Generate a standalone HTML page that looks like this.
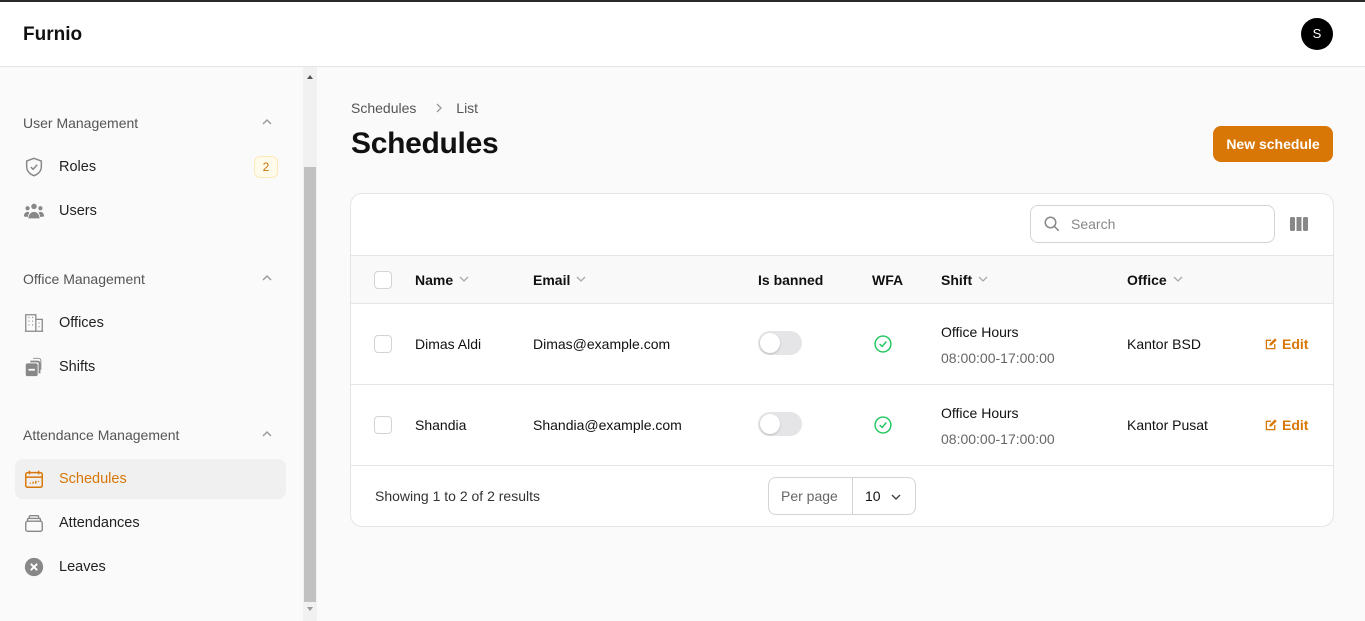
<!DOCTYPE html>
<html><head><style>
*{box-sizing:border-box;margin:0;padding:0}
body{width:1365px;height:621px;overflow:hidden;background:#fafafa;font-family:"Liberation Sans",sans-serif;color:#111;position:relative}
.top{position:absolute;left:0;top:0;width:1365px;height:67px;background:#fff;border-bottom:1px solid #e5e5e5;border-top:2px solid #2a2a2a}
.logo{position:absolute;left:23px;top:22px;font-size:19px;font-weight:bold;color:#111}
.av{position:absolute;left:1301px;top:16px;width:32px;height:32px;border-radius:50%;background:#000;color:#fff;font-size:13px;text-align:center;line-height:32px}
.side{position:absolute;left:0;top:67px;width:303px;height:554px;background:#fafafa}
.sb{position:absolute;left:303px;top:67px;width:14px;height:554px;background:#f1f1f1}
.sb .th{position:absolute;left:1px;top:100px;width:12px;height:435px;background:#c1c1c1}
.grp{position:absolute;left:23px;font-size:14px;color:#555}
.chev{position:absolute;left:262px;width:10px;height:10px}
.it{position:absolute;left:23px;font-size:14.5px;color:#222;display:flex;align-items:center}
.it svg{width:22px;height:22px;margin-right:14px}
.act{position:absolute;left:15px;top:459px;width:271px;height:40px;background:#f0f0f1;border-radius:8px}
.badge{position:absolute;left:254px;top:156px;width:24px;height:22px;border:1px solid #fde9b8;background:#fffbeb;color:#c2750c;border-radius:6px;font-size:12px;text-align:center;line-height:20px}
.bc{position:absolute;left:351px;top:100px;font-size:14px;color:#555}
h1{position:absolute;left:351px;top:127px;font-size:30px;font-weight:bold;color:#111;letter-spacing:-0.3px}
.btn{position:absolute;left:1213px;top:126px;width:120px;height:36px;background:#d97706;color:#fff;border-radius:8px;font-size:14px;font-weight:bold;text-align:center;line-height:36px}
.card{position:absolute;left:350px;top:193px;width:984px;height:334px;background:#fff;border:1px solid #e5e5e5;border-radius:12px;overflow:hidden}
.search{position:absolute;left:679px;top:11px;width:245px;height:38px;border:1px solid #d4d4d4;border-radius:8px;font-size:14px;color:#888;padding-left:40px;line-height:36px}
.thead{position:absolute;left:0;top:61px;width:984px;height:49px;background:#f9f9f9;border-top:1px solid #e5e5e5;border-bottom:1px solid #e5e5e5}
.t{position:absolute;font-size:14px}
.h{font-weight:bold;color:#111}
.h svg{margin-left:6px;vertical-align:1px}
.cb{position:absolute;left:23px;width:18px;height:18px;border:1px solid #d4d4d4;border-radius:4px;background:#fff}
.row{position:absolute;left:0;width:984px;height:81px;border-bottom:1px solid #e5e5e5}
.tog{position:absolute;left:407px;width:44px;height:24px;background:#e5e5e7;border-radius:12px}
.tog:after{content:"";position:absolute;left:2px;top:2px;width:20px;height:20px;border-radius:50%;background:#fff;box-shadow:0 1px 2px rgba(0,0,0,.2)}
.gray{color:#666}
.edit{color:#d97706;font-weight:bold}
.edit svg{vertical-align:-2px;margin-right:4px}
.pp{position:absolute;left:417px;top:283px;width:148px;height:38px;border:1px solid #d4d4d4;border-radius:8px;font-size:14px}
</style></head><body>
<div class="top"><div class="logo">Furnio</div><div class="av">S</div></div>
<div class="side"></div>
<div class="grp" style="top:115px">User Management</div>
<svg class="chev" style="top:117px" viewBox="0 0 10 10"><path d="M1 7l4-4 4 4" fill="none" stroke="#999" stroke-width="1.4"/></svg>
<div class="it" style="top:156px"><svg viewBox="0 0 24 24" fill="none" stroke="#888" stroke-width="1.6"><path d="M12 2.5l8 3v6c0 5-3.5 8.5-8 10-4.5-1.5-8-5-8-10v-6z"/><path d="M8.5 12l2.5 2.5 4.5-5"/></svg>Roles</div>
<div class="badge">2</div>
<div class="it" style="top:200px"><svg viewBox="0 0 24 24" fill="#888"><circle cx="12" cy="7" r="3"/><circle cx="5" cy="9" r="2.3"/><circle cx="19" cy="9" r="2.3"/><path d="M6 20c0-4 2.5-7 6-7s6 3 6 7z"/><path d="M1 18c0-3 1.5-5 4-5 1 0 1.5.3 2 .6-1 1.3-1.5 3-1.7 5z"/><path d="M23 18c0-3-1.5-5-4-5-1 0-1.5.3-2 .6 1 1.3 1.5 3 1.7 5z"/></svg>Users</div>
<div class="grp" style="top:271px">Office Management</div>
<svg class="chev" style="top:273px" viewBox="0 0 10 10"><path d="M1 7l4-4 4 4" fill="none" stroke="#999" stroke-width="1.4"/></svg>
<div class="it" style="top:312px"><svg viewBox="0 0 24 24" fill="none" stroke="#888" stroke-width="1.4"><path d="M3 21V3h11v18M14 8h7v13M2 21h20M6 6h1M10 6h1M6 10h1M10 10h1M6 14h1M10 14h1M17 12h1M17 16h1"/></svg>Offices</div>
<div class="it" style="top:356px"><svg viewBox="0 0 24 24" fill="#888"><rect x="3" y="8" width="13" height="14" rx="2"/><path d="M8 5h8a3 3 0 013 3v11h-2V8a1 1 0 00-1-1H8z"/><path d="M11 2h6a3 3 0 013 3v10h-1V5a2 2 0 00-2-2h-6z"/><rect x="6" y="14" width="7" height="2" fill="#fafafa"/></svg>Shifts</div>
<div class="grp" style="top:427px">Attendance Management</div>
<svg class="chev" style="top:429px" viewBox="0 0 10 10"><path d="M1 7l4-4 4 4" fill="none" stroke="#999" stroke-width="1.4"/></svg>
<div class="act"></div>
<div class="it" style="top:468px;color:#d97706"><svg viewBox="0 0 24 24" fill="none" stroke="#d97706" stroke-width="1.6"><rect x="3" y="5" width="18" height="16" rx="2"/><path d="M3 10h18M7 3v4M17 3v4M8 16v1M11 15v2M14 14v3M17 14v1"/></svg>Schedules</div>
<div class="it" style="top:512px"><svg viewBox="0 0 24 24" fill="none" stroke="#888" stroke-width="1.5"><rect x="3" y="10" width="18" height="11" rx="2"/><path d="M5 10V8a1 1 0 011-1h12a1 1 0 011 1v2M7 7V5a1 1 0 011-1h8a1 1 0 011 1v2"/></svg>Attendances</div>
<div class="it" style="top:556px"><svg viewBox="0 0 24 24"><circle cx="12" cy="12" r="10" fill="#888"/><path d="M8.5 8.5l7 7M15.5 8.5l-7 7" stroke="#fff" stroke-width="2"/></svg>Leaves</div>
<div class="sb"><div class="th"></div><div style="position:absolute;left:4px;top:5px;border:3px solid transparent;border-bottom:4px solid #555"></div><div style="position:absolute;left:4px;top:540px;border:3px solid transparent;border-top:4px solid #999"></div></div>

<div class="bc">Schedules <svg width="10" height="10" viewBox="0 0 10 10" style="margin:0 12px 0 14px"><path d="M3 1l4 4-4 4" fill="none" stroke="#999" stroke-width="1.3"/></svg>List</div>
<h1>Schedules</h1>
<div class="btn">New schedule</div>
<div class="card">
<div class="search">Search</div>
<svg style="position:absolute;left:692px;top:21px" width="18" height="18" viewBox="0 0 24 24" fill="none" stroke="#888" stroke-width="2"><circle cx="10" cy="10" r="7"/><path d="M15 15l6 6"/></svg>
<svg style="position:absolute;left:939px;top:22px" width="18" height="16" viewBox="0 0 18 16" fill="#888"><rect x="0" y="1" width="5" height="14" rx="1.5"/><rect x="6.5" y="1" width="5" height="14"/><rect x="13" y="1" width="5" height="14" rx="1.5"/></svg>
<div class="thead">
<div class="cb" style="top:15px"></div>
<div class="t h" style="left:64px;top:16px">Name<svg width="10" height="10" viewBox="0 0 10 10"><path d="M1 3l4 4 4-4" fill="none" stroke="#aaa" stroke-width="1.3"/></svg></div>
<div class="t h" style="left:182px;top:16px">Email<svg width="10" height="10" viewBox="0 0 10 10"><path d="M1 3l4 4 4-4" fill="none" stroke="#aaa" stroke-width="1.3"/></svg></div>
<div class="t h" style="left:407px;top:16px">Is banned</div>
<div class="t h" style="left:521px;top:16px">WFA</div>
<div class="t h" style="left:590px;top:16px">Shift<svg width="10" height="10" viewBox="0 0 10 10"><path d="M1 3l4 4 4-4" fill="none" stroke="#aaa" stroke-width="1.3"/></svg></div>
<div class="t h" style="left:776px;top:16px">Office<svg width="10" height="10" viewBox="0 0 10 10"><path d="M1 3l4 4 4-4" fill="none" stroke="#aaa" stroke-width="1.3"/></svg></div>
</div>
<div class="row" style="top:110px">
<div class="cb" style="top:31px"></div>
<div class="t" style="left:64px;top:32px">Dimas Aldi</div>
<div class="t" style="left:182px;top:32px">Dimas@example.com</div>
<div class="tog" style="top:27px"></div>
<svg style="position:absolute;left:522px;top:30px" width="20" height="20" viewBox="0 0 24 24" fill="none" stroke="#22c55e" stroke-width="1.7"><circle cx="12" cy="12" r="9.5"/><path d="M8 12l3 3 5-6"/></svg>
<div class="t" style="left:590px;top:20px">Office Hours</div>
<div class="t gray" style="left:590px;top:46px">08:00:00-17:00:00</div>
<div class="t" style="left:776px;top:32px">Kantor BSD</div>
<div class="t edit" style="left:913px;top:32px"><svg width="14" height="14" viewBox="0 0 16 16"><path d="M2 3h6v1.5H3.5v8h8V8H13v6H2z" fill="#d97706"/><path d="M6 10l.5-2.5L12.5 1.5l2 2L8.5 9.5z" fill="#d97706"/></svg>Edit</div>
</div>
<div class="row" style="top:191px">
<div class="cb" style="top:31px"></div>
<div class="t" style="left:64px;top:32px">Shandia</div>
<div class="t" style="left:182px;top:32px">Shandia@example.com</div>
<div class="tog" style="top:27px"></div>
<svg style="position:absolute;left:522px;top:30px" width="20" height="20" viewBox="0 0 24 24" fill="none" stroke="#22c55e" stroke-width="1.7"><circle cx="12" cy="12" r="9.5"/><path d="M8 12l3 3 5-6"/></svg>
<div class="t" style="left:590px;top:20px">Office Hours</div>
<div class="t gray" style="left:590px;top:46px">08:00:00-17:00:00</div>
<div class="t" style="left:776px;top:32px">Kantor Pusat</div>
<div class="t edit" style="left:913px;top:32px"><svg width="14" height="14" viewBox="0 0 16 16"><path d="M2 3h6v1.5H3.5v8h8V8H13v6H2z" fill="#d97706"/><path d="M6 10l.5-2.5L12.5 1.5l2 2L8.5 9.5z" fill="#d97706"/></svg>Edit</div>
</div>
<div class="t" style="left:24px;top:294px;color:#333">Showing 1 to 2 of 2 results</div>
<div class="pp"><span style="position:absolute;left:12px;top:10px;color:#666">Per page</span><div style="position:absolute;left:83px;top:0;width:1px;height:36px;background:#d4d4d4"></div><span style="position:absolute;left:96px;top:10px">10</span><svg style="position:absolute;left:122px;top:14px" width="10" height="10" viewBox="0 0 10 10"><path d="M1 3l4 4 4-4" fill="none" stroke="#444" stroke-width="1.4"/></svg></div>
</div>
</body></html>
